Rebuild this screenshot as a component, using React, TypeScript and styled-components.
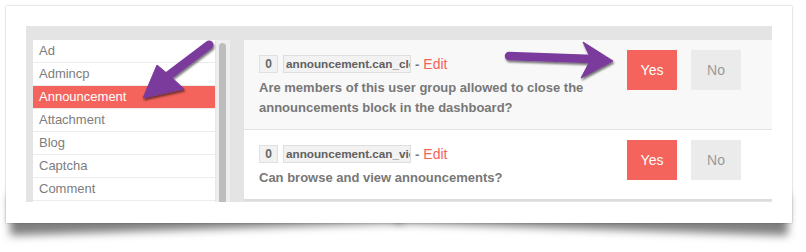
import React from "react";
import styled, { createGlobalStyle } from "styled-components";

const Global = createGlobalStyle`
  html { background: #fff; }
  html, body { margin: 0; padding: 0; }
  body { font-family: "Liberation Sans", Arial, Helvetica, sans-serif; }
  * { box-sizing: border-box; }
`;

const Page = styled.div`
  position: relative;
  z-index: 0;
  width: 806px;
  height: 252px;
  padding: 6px 14px 0 6px;
`;

const Card = styled.div`
  position: relative;
  width: 786px;
  height: 217px;
  background: #fff;
  padding: 20px 20px 0 20px;
  box-shadow: 0 0 2px rgba(0, 0, 0, 0.28);

  &::before,
  &::after {
    content: "";
    position: absolute;
    z-index: -1;
    bottom: 14px;
    width: 50%;
    height: 40px;
    background: #999;
    box-shadow: 0 20px 9px rgba(0, 0, 0, 0.5);
  }
  &::before {
    left: 3px;
    transform: rotate(-1.9deg);
  }
  &::after {
    right: 3px;
    transform: rotate(1.9deg);
  }
`;

const Frame = styled.div`
  display: flex;
  height: 176px;
  overflow: hidden;
  background: #e4e4e4;
  padding: 14px 0 0 7px;
`;

const Sidebar = styled.div`
  display: flex;
  flex: 0 0 auto;
  height: 200px;
`;

const List = styled.ul`
  list-style: none;
  margin: 0;
  padding: 0;
  width: 183px;
  background: #fff;
  border-right: 1px solid #e8e8e8;
`;

const Item = styled.li<{ $active?: boolean }>`
  height: 23px;
  line-height: 22px;
  padding-left: 6px;
  font-size: 13px;
  color: ${(p) => (p.$active ? "#fff" : "#7d7d7d")};
  background: ${(p) => (p.$active ? "#f4645c" : "#fff")};
  border-bottom: 1px solid #ececec;
`;

const Track = styled.div`
  width: 14px;
  background: #eeeeee;
  padding: 3px 3px 0 3px;
`;

const Thumb = styled.div`
  width: 7px;
  height: 100%;
  border-radius: 4px;
  background: #bdbdbd;
`;

const Panel = styled.div`
  flex: 1;
  margin-left: 14px;
  display: flex;
  flex-direction: column;
`;

const Row = styled.div<{ $shade?: boolean; $thick?: boolean }>`
  display: flex;
  align-items: flex-start;
  background: ${(p) => (p.$shade ? "#f8f8f8" : "#fff")};
  border-bottom: ${(p) => (p.$thick ? "2px solid #dcdcdc" : "1px solid #e2e2e2")};
  padding: 15px 31px 11px 15px;
  flex: 0 0 auto;
`;

const Info = styled.div`
  flex: 1;
  min-width: 0;
`;

const Meta = styled.div`
  display: flex;
  align-items: center;
  height: 18px;
  margin-bottom: 5px;
`;

const Badge = styled.span`
  display: inline-flex;
  align-items: center;
  justify-content: center;
  width: 19px;
  height: 18px;
  background: #f2f2f2;
  border: 1px solid #e0e0e0;
  font-size: 12px;
  font-weight: bold;
  color: #666;
`;

const Key = styled.span`
  display: inline-block;
  flex: 0 0 auto;
  width: 128px;
  height: 18px;
  margin-left: 5px;
  padding: 0 2px;
  line-height: 16px;
  overflow: hidden;
  white-space: nowrap;
  background: #f2f2f2;
  border: 1px solid #dedede;
  font-size: 11.7px;
  font-weight: bold;
  color: #606060;
`;

const Dash = styled.span`
  margin: 0 4px;
  font-size: 13px;
  font-weight: bold;
  color: #777;
`;

const EditLink = styled.a`
  font-size: 14px;
  color: #f4645c;
  text-decoration: none;
`;

const Question = styled.div`
  font-size: 13px;
  font-weight: bold;
  line-height: 20px;
  color: #777;
  max-width: 360px;
`;

const Buttons = styled.div`
  display: flex;
  gap: 14px;
  margin-top: -5px;
  margin-left: 16px;
`;

const Choice = styled.button<{ $on?: boolean }>`
  width: 50px;
  height: 40px;
  border: none;
  padding: 0;
  font-family: inherit;
  font-size: 14px;
  background: ${(p) => (p.$on ? "#f4645c" : "#ebebeb")};
  color: ${(p) => (p.$on ? "#fff" : "#9a9a9a")};
`;

const Overlay = styled.svg`
  position: absolute;
  left: 0;
  top: 0;
  pointer-events: none;
`;

const modules = ["Ad", "Admincp", "Announcement", "Attachment", "Blog", "Captcha", "Comment", "Contact"];

const settings = [
  {
    key: "announcement.can_close_announcement",
    text: "Are members of this user group allowed to close the announcements block in the dashboard?",
  },
  {
    key: "announcement.can_view_announcements",
    text: "Can browse and view announcements?",
  },
];

export default function App() {
  return (
    <>
      <Global />
      <Page>
        <Card>
          <Frame>
            <Sidebar>
              <List>
                {modules.map((m) => (
                  <Item key={m} $active={m === "Announcement"}>
                    {m}
                  </Item>
                ))}
              </List>
              <Track>
                <Thumb />
              </Track>
            </Sidebar>
            <Panel>
              {settings.map((s, i) => (
                <Row key={s.key} $shade={i === 0} $thick={i === 1}>
                  <Info>
                    <Meta>
                      <Badge>0</Badge>
                      <Key>{s.key}</Key>
                      <Dash>-</Dash>
                      <EditLink href="#">Edit</EditLink>
                    </Meta>
                    <Question>{s.text}</Question>
                  </Info>
                  <Buttons>
                    <Choice $on>Yes</Choice>
                    <Choice>No</Choice>
                  </Buttons>
                </Row>
              ))}
            </Panel>
          </Frame>
        </Card>
        <Overlay width="806" height="252" viewBox="0 0 806 252">
          <defs>
            <filter id="sh" x="-20%" y="-20%" width="140%" height="160%">
              <feDropShadow dx="1" dy="2" stdDeviation="1.2" floodColor="#000" floodOpacity="0.55" />
            </filter>
          </defs>
          <g filter="url(#sh)" fill="#7a3a9c" stroke="#7a3a9c">
            <line x1="209" y1="45" x2="168" y2="76" strokeWidth="9" strokeLinecap="round" />
            <polygon points="143,98 157,65 170,76 184,89" strokeWidth="1" strokeLinejoin="round" />
            <line x1="509" y1="56" x2="592" y2="59" strokeWidth="8.5" strokeLinecap="round" />
            <polygon points="613,61 583,42 591,59 581,78" strokeWidth="1" strokeLinejoin="round" />
          </g>
        </Overlay>
      </Page>
    </>
  );
}
